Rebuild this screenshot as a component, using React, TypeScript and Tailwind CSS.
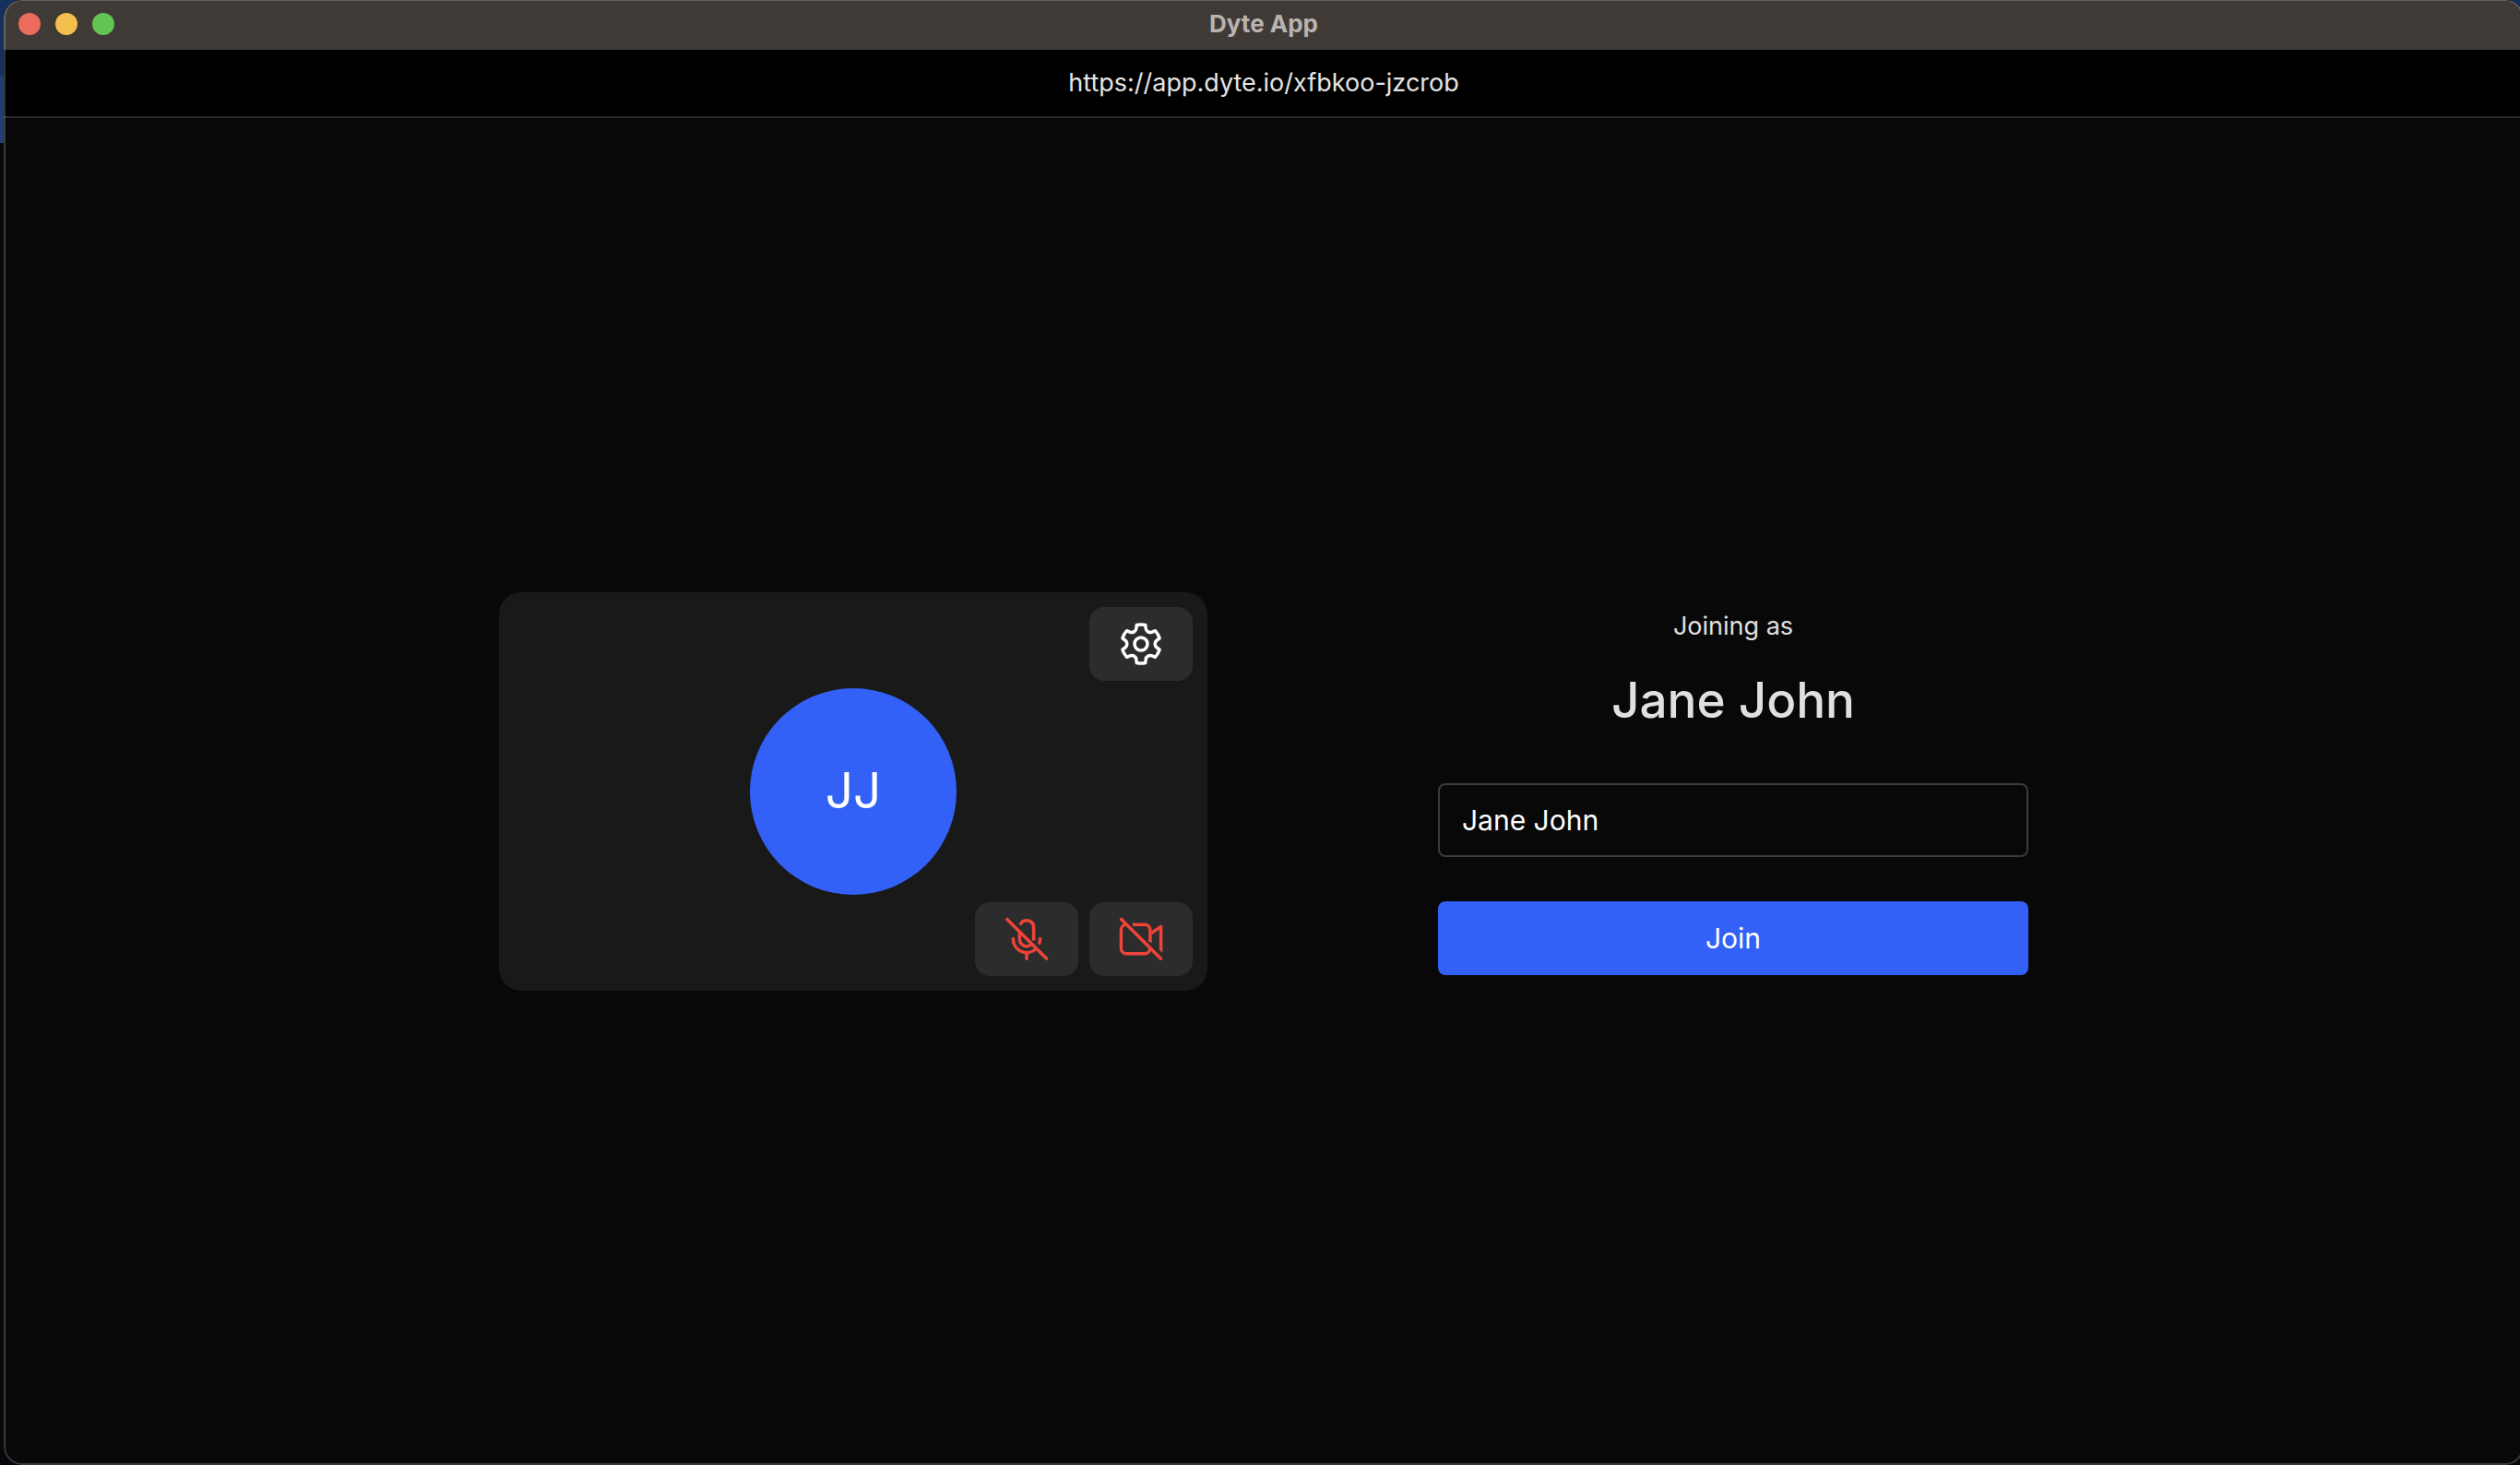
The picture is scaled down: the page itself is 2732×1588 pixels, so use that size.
import { useState } from "react";
import type { ReactNode } from "react";

function GearIcon() {
  return (
    <svg viewBox="0 0 24 24" className="size-14" fill="currentColor" aria-hidden="true">
      <path d="M12.012 2.25c.734.008 1.465.093 2.182.253a.75.75 0 0 1 .582.649l.17 1.527a1.384 1.384 0 0 0 1.927 1.116l1.401-.615a.75.75 0 0 1 .85.174 9.792 9.792 0 0 1 2.204 3.792.75.75 0 0 1-.271.825l-1.242.916a1.381 1.381 0 0 0 0 2.226l1.243.915a.75.75 0 0 1 .272.826 9.797 9.797 0 0 1-2.204 3.792.75.75 0 0 1-.848.175l-1.407-.617a1.38 1.38 0 0 0-1.926 1.114l-.169 1.526a.75.75 0 0 1-.572.647 9.518 9.518 0 0 1-4.406 0 .75.75 0 0 1-.572-.647l-.168-1.524a1.382 1.382 0 0 0-1.926-1.11l-1.406.616a.75.75 0 0 1-.849-.175 9.798 9.798 0 0 1-2.204-3.796.75.75 0 0 1 .272-.826l1.243-.916a1.38 1.38 0 0 0 0-2.226l-1.243-.914a.75.75 0 0 1-.271-.826 9.793 9.793 0 0 1 2.204-3.792.75.75 0 0 1 .85-.174l1.4.615a1.387 1.387 0 0 0 1.93-1.118l.17-1.526a.75.75 0 0 1 .583-.65c.717-.159 1.45-.243 2.201-.252Zm0 1.5a9.135 9.135 0 0 0-1.354.117l-.109.977A2.886 2.886 0 0 1 6.525 7.17l-.898-.394a8.293 8.293 0 0 0-1.348 2.317l.798.587a2.881 2.881 0 0 1 0 4.643l-.799.588c.32.842.776 1.626 1.348 2.322l.905-.397a2.882 2.882 0 0 1 4.017 2.318l.11.984c.889.15 1.798.15 2.687 0l.11-.984a2.881 2.881 0 0 1 4.018-2.322l.905.396a8.296 8.296 0 0 0 1.347-2.318l-.798-.588a2.881 2.881 0 0 1 0-4.643l.796-.587a8.293 8.293 0 0 0-1.348-2.317l-.896.393a2.884 2.884 0 0 1-4.023-2.324l-.11-.976a8.988 8.988 0 0 0-1.333-.117ZM12 8.25a3.75 3.75 0 1 1 0 7.5 3.75 3.75 0 0 1 0-7.5Zm0 1.5a2.25 2.25 0 1 0 0 4.5 2.25 2.25 0 0 0 0-4.5Z" />
    </svg>
  );
}

function MicOffIcon() {
  return (
    <svg viewBox="0 0 24 24" className="size-14" fill="none" stroke="currentColor" strokeWidth="1.5" aria-hidden="true">
      <path strokeLinecap="round" d="M2.95 2.75 21.2 21" />
      <path d="M9 5.45A3.25 3.25 0 0 1 15.25 6V12.6" />
      <path d="M8.75 8.7V12A3.25 3.25 0 0 0 14.3 14.3" />
      <path strokeLinecap="round" d="M5.75 11.75V12A6.25 6.25 0 0 0 16.4 16.4" />
      <path strokeLinecap="round" d="M18.25 11.75V12A6.2 6.2 0 0 1 17.95 13.8" />
      <path strokeLinecap="round" d="M12 18.25V21.15" />
    </svg>
  );
}

function CameraOffIcon() {
  return (
    <svg viewBox="0 0 24 24" className="size-14" fill="none" stroke="currentColor" strokeWidth="1.5" aria-hidden="true">
      <path strokeLinecap="round" d="M2.85 2.75 21.15 21" />
      <path d="M5.25 5.25A2.5 2.5 0 0 0 2.75 7.75V16.25A2.5 2.5 0 0 0 5.25 18.75H13.75A2.5 2.5 0 0 0 16.2 16.3" />
      <path d="M8.2 5.25H13.75A2.5 2.5 0 0 1 16.25 7.75V13.3" />
      <path fill="currentColor" stroke="none" d="M7.7 4.5H9V6H9.2Z" />
      <path fill="currentColor" stroke="none" d="M15.5 12.4H17V13.95Z" />
      <path fill="currentColor" stroke="none" d="M17 8.15 20.85 5.55C21.35 5.2 22 5.5 22 6.1V17.9C22 18.1 21.95 18.2 21.9 18.3L20.5 16.9V7.65L17 9.95Z" />
    </svg>
  );
}

function ToolButton({ label, tone, children }: { label: string; tone: string; children: ReactNode }) {
  return (
    <button type="button" aria-label={label} className={`flex h-20 w-28 items-center justify-center rounded-2xl bg-[#2c2c2c] ${tone}`}>
      {children}
    </button>
  );
}

function VideoPreview() {
  return (
    <section className="relative flex aspect-video w-3xl items-center justify-center rounded-3xl bg-[#191919]" aria-label="Camera preview">
      <div className="flex size-56 items-center justify-center rounded-full bg-[#3360f6] text-[53px] text-white">JJ</div>
      <div className="absolute top-4 right-4">
        <ToolButton label="Settings" tone="text-white">
          <GearIcon />
        </ToolButton>
      </div>
      <div className="absolute right-4 bottom-4 flex gap-3">
        <ToolButton label="Turn microphone on" tone="text-[#ee4439]">
          <MicOffIcon />
        </ToolButton>
        <ToolButton label="Turn camera on" tone="text-[#ee4439]">
          <CameraOffIcon />
        </ToolButton>
      </div>
    </section>
  );
}

function JoinForm() {
  const [name, setName] = useState("Jane John");
  return (
    <form className="flex w-160 flex-col" onSubmit={(e) => e.preventDefault()}>
      <p className="text-center text-[27px] leading-10 text-[#e0e0e0]">Joining as</p>
      <h1 className="mt-6 text-center text-[53px] leading-[72px] font-medium text-[#e0e0e0]">{name}</h1>
      <input
        aria-label="Your name"
        value={name}
        onChange={(e) => setName(e.target.value)}
        className="mt-[54px] h-20 rounded-lg border-2 border-[#3c3c3c] bg-transparent px-6 text-[30px] text-white outline-none"
      />
      <button type="submit" className="mt-12 h-20 rounded-lg bg-[#3360f6] text-[30px] text-white">
        Join
      </button>
    </form>
  );
}

export default function App() {
  return (
    <div className="flex min-h-screen overflow-hidden bg-[#08080c] bg-[linear-gradient(to_bottom,#16305c_0,#16305c_82px,#1f3f76_82px,#1f3f76_155px,#08080c_155px)] pl-1 font-['Inter',sans-serif]">
      <div className="relative -mr-1 flex grow flex-col overflow-hidden rounded-[20px] bg-[#080808]">
        <header className="relative flex h-[54px] items-center justify-center bg-[#403a37] pb-0.5">
          <div className="absolute left-4 flex gap-4">
            <button type="button" aria-label="Close" className="size-6 rounded-full bg-[#ed6a5e]" />
            <button type="button" aria-label="Minimize" className="size-6 rounded-full bg-[#f5bf4f]" />
            <button type="button" aria-label="Zoom" className="size-6 rounded-full bg-[#61c554]" />
          </div>
          <span className="text-[26px] leading-8 font-bold text-[#b9b3b0]">Dyte App</span>
        </header>
        <div className="flex h-[74px] items-center justify-center border-b-2 border-[#2a2a2a] bg-black text-[27px] text-[#e4e4e4]">
          https://app.dyte.io/xfbkoo-jzcrob
        </div>
        <main className="flex grow items-center justify-center gap-[250px]">
          <VideoPreview />
          <JoinForm />
        </main>
        <div className="pointer-events-none absolute inset-0 rounded-[20px] border-2 border-t border-white/20" />
      </div>
    </div>
  );
}
